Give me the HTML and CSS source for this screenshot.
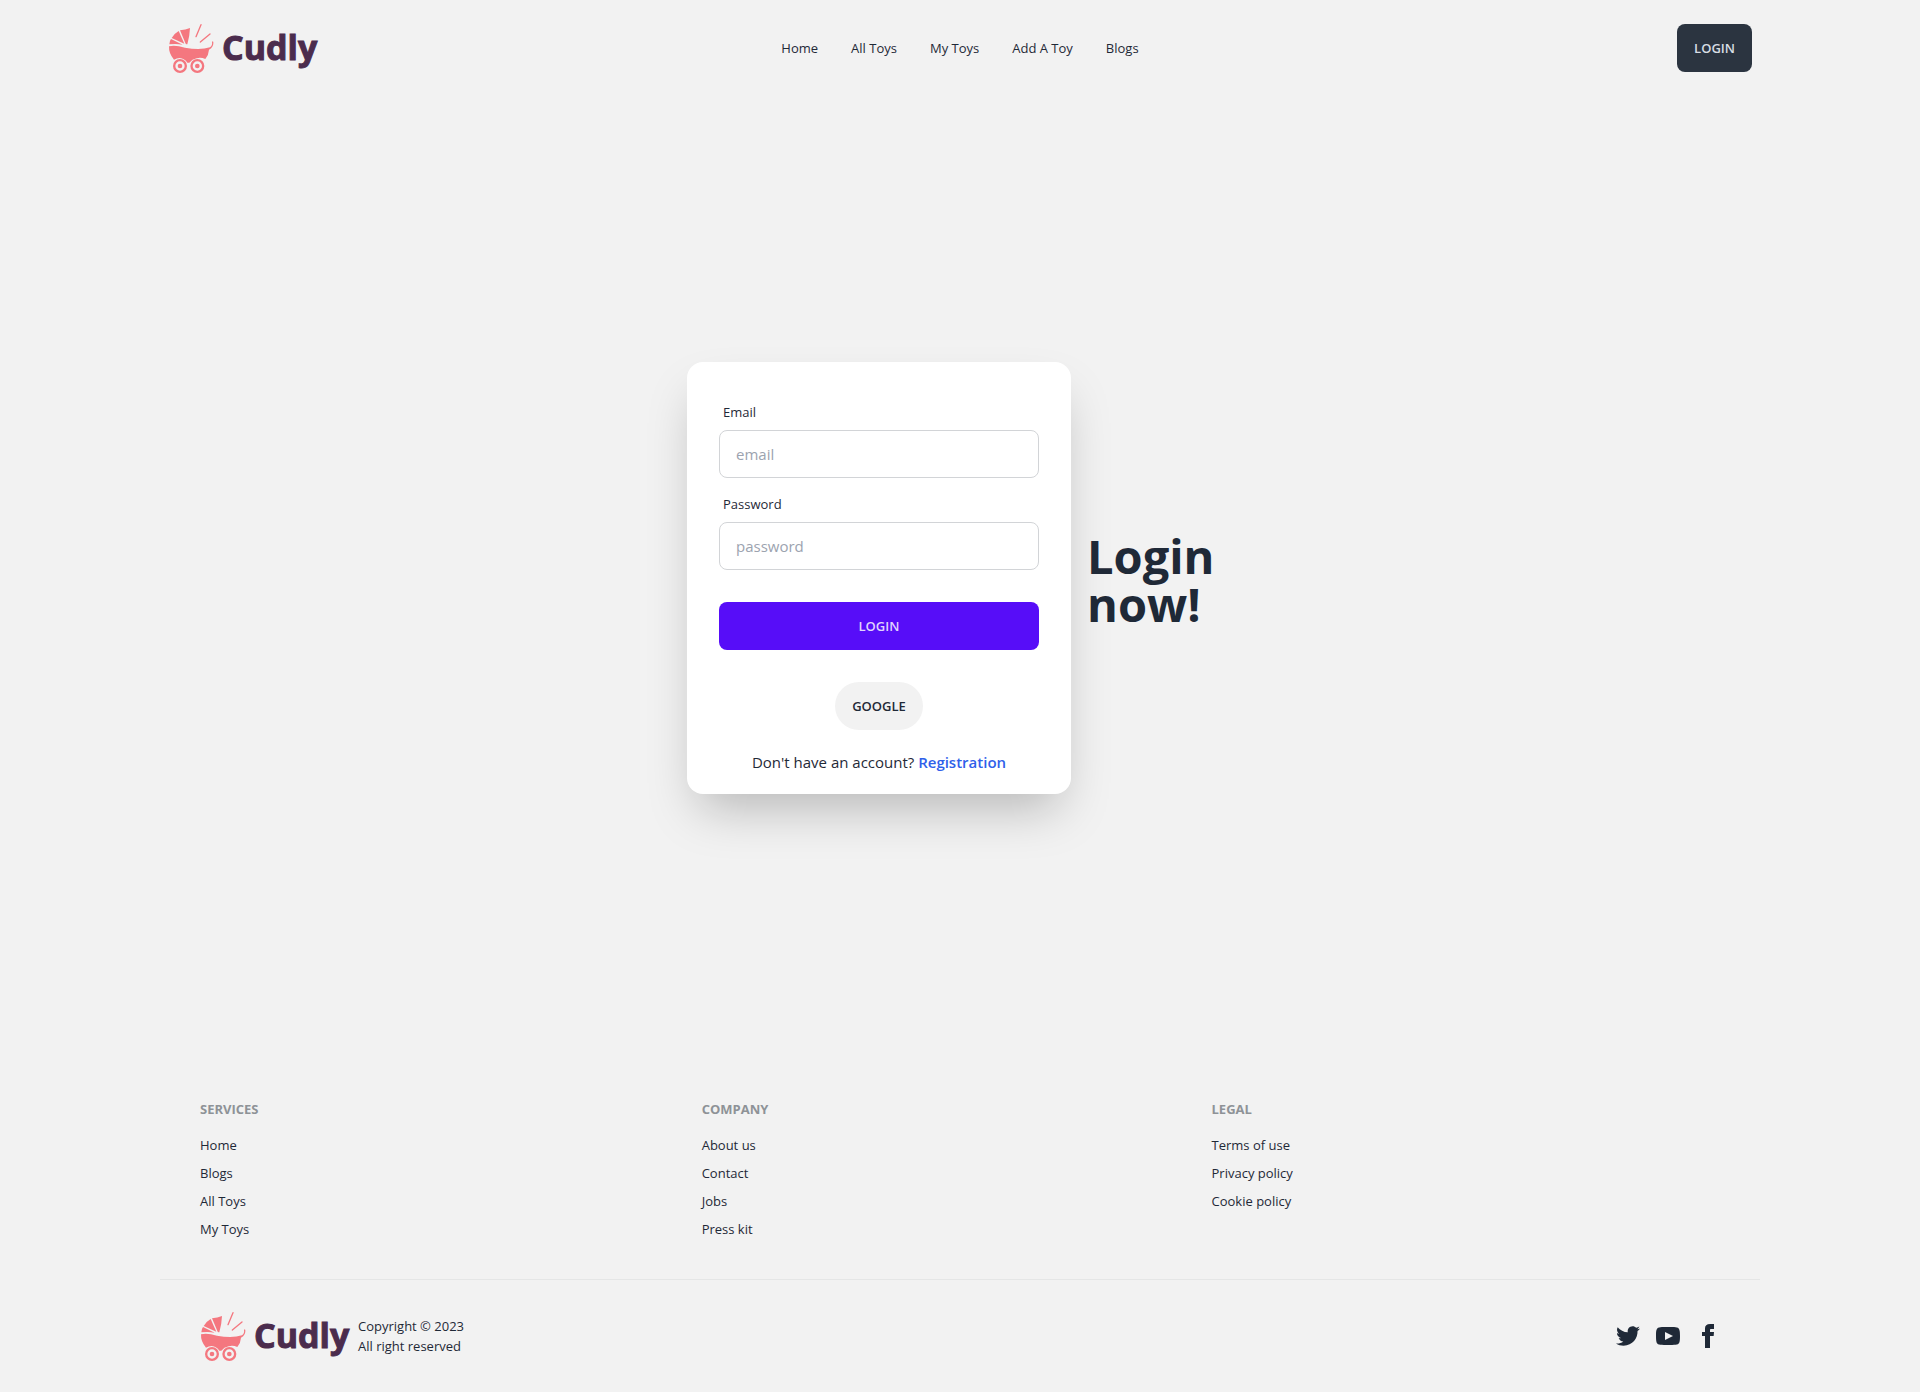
FILE: index.html
```html
<!DOCTYPE html>
<html lang="en">
<head>
<meta charset="utf-8">
<meta name="viewport" content="width=device-width, initial-scale=1">
<title>Cudly | Login</title>
<link rel="stylesheet" href="styles.css">
</head>
<body>
<svg width="0" height="0" class="sprite" aria-hidden="true">
  <symbol id="pram" viewBox="54 42 135 144">
    <g fill="#f4777f">
      <path d="M90 61Q107 60 120 54Q119 79 112 103Q109 103 107 101Z"/>
      <path d="M86 63L103 101L65 84Q72 71 86 63Z"/>
      <path d="M63 87L98 104Q78 100 58 103Q58 94 63 87Z"/>
      <path d="M57 109Q75 104 105 113Q150 122 180 112Q188 106 186 96Q188 92 190 96Q192 111 177 119Q176 135 166 147Q152 141 140 145Q126 148 118 158H112Q104 146 89 144Q80 144 72 149Q56 131 57 109Z"/>
    </g>
    <g fill="none" stroke="#f4777f">
      <circle cx="90" cy="168" r="17.500" stroke-width="7"/>
      <circle cx="142" cy="168" r="17.500" stroke-width="7"/>
      <path d="M153 44L138 80M180 72L151 96" stroke-width="4" stroke-linecap="round"/>
    </g>
    <g fill="#f4777f"><circle cx="90" cy="168" r="7"/><circle cx="142" cy="168" r="7"/></g>
  </symbol>
</svg>

<div class="page">
  <header class="navbar">
    <a href="#" class="logo"><svg aria-hidden="true"><use href="#pram"/></svg><span>Cudly</span></a>
    <nav class="menu">
      <a href="#">Home</a>
      <a href="#">All Toys</a>
      <a href="#">My Toys</a>
      <a href="#">Add A Toy</a>
      <a href="#">Blogs</a>
    </nav>
    <div class="navbar-end"><button type="button" class="btn btn-neutral">LOGIN</button></div>
  </header>

  <main class="hero">
    <div class="hero-content">
      <div class="card">
        <form class="form">
          <label for="email">Email</label>
          <input id="email" type="email" placeholder="email">
          <label for="password">Password</label>
          <input id="password" type="password" placeholder="password">
          <button type="submit" class="btn btn-primary">LOGIN</button>
        </form>
        <button type="button" class="btn btn-pill">GOOGLE</button>
        <p class="signup">Don't have an account? <a href="#">Registration</a></p>
      </div>
      <h1>Login now!</h1>
    </div>
  </main>

  <footer>
    <div class="footer-links">
      <nav>
        <h2>SERVICES</h2>
        <a href="#">Home</a>
        <a href="#">Blogs</a>
        <a href="#">All Toys</a>
        <a href="#">My Toys</a>
      </nav>
      <nav>
        <h2>COMPANY</h2>
        <a href="#">About us</a>
        <a href="#">Contact</a>
        <a href="#">Jobs</a>
        <a href="#">Press kit</a>
      </nav>
      <nav>
        <h2>LEGAL</h2>
        <a href="#">Terms of use</a>
        <a href="#">Privacy policy</a>
        <a href="#">Cookie policy</a>
      </nav>
    </div>
    <div class="footer-bottom">
      <div class="brand">
        <a href="#" class="logo"><svg aria-hidden="true"><use href="#pram"/></svg><span>Cudly</span></a>
        <p>Copyright © 2023<br>All right reserved</p>
      </div>
      <div class="social">
        <a href="#" aria-label="Twitter"><svg viewBox="0 0 24 24"><path d="M24 4.557c-.883.392-1.832.656-2.828.775 1.017-.609 1.798-1.574 2.165-2.724-.951.564-2.005.974-3.127 1.195-.897-.957-2.178-1.555-3.594-1.555-3.179 0-5.515 2.966-4.797 6.045-4.091-.205-7.719-2.165-10.148-5.144-1.29 2.213-.669 5.108 1.523 6.574-.806-.026-1.566-.247-2.229-.616-.054 2.281 1.581 4.415 3.949 4.89-.693.188-1.452.232-2.224.084.626 1.956 2.444 3.379 4.6 3.419-2.07 1.623-4.678 2.348-7.29 2.04 2.179 1.397 4.768 2.212 7.548 2.212 9.142 0 14.307-7.721 13.995-14.646.962-.695 1.797-1.562 2.457-2.549z"/></svg></a>
        <a href="#" aria-label="YouTube"><svg viewBox="0 0 24 24"><path d="M19.615 3.184c-3.604-.246-11.631-.245-15.230 0-3.897.266-4.356 2.620-4.385 8.816.029 6.185.484 8.549 4.385 8.816 3.600.245 11.626.246 15.230 0 3.897-.266 4.356-2.620 4.385-8.816-.029-6.185-.484-8.549-4.385-8.816zm-10.615 12.816v-8l8 3.993-8 4.007z"/></svg></a>
        <a href="#" aria-label="Facebook"><svg viewBox="0 0 24 24"><path d="M9 8h-3v4h3v12h5v-12h3.642l.358-4h-4v-1.667c0-.955.192-1.333 1.115-1.333h2.885v-5h-3.808c-3.596 0-5.192 1.583-5.192 4.615v3.385z"/></svg></a>
      </div>
    </div>
  </footer>
</div>
</body>
</html>
```
FILE: styles.css
```css
* { box-sizing: border-box; }

body {
  margin: 0;
  background: #f2f2f2;
  color: #1f2937;
  font: 13px/20px "Open Sans", "Noto Sans", sans-serif;
}

a { color: inherit; text-decoration: none; }
h1, h2, p { margin: 0; }
.sprite { position: absolute; }
symbol { overflow: visible; }

.page {
  display: flex;
  flex-direction: column;
  max-width: 1600px;
  min-height: 100vh;
  margin: 0 auto;
}

.logo {
  display: flex;
  align-items: flex-start;
  gap: 9px;
  width: 150px;
  height: 48px;
  color: #4b2c4d;
  font-size: 34px;
  font-weight: 700;
  line-height: 46px;
  -webkit-text-stroke: 1px #4b2c4d;
}

.logo svg {
  flex: none;
  width: 45px;
  height: 48px;
  overflow: visible;
}

.navbar {
  display: grid;
  grid-template-columns: 1fr auto 1fr;
  align-items: center;
  padding: 24px 8px;
}

.menu { display: flex; gap: 33px; }
.navbar-end { display: flex; justify-content: flex-end; }

.btn {
  height: 48px;
  padding: 0 17px;
  border: 0;
  border-radius: 8px;
  font: 600 13px/20px "Open Sans", "Noto Sans", sans-serif;
  cursor: pointer;
}

.btn-neutral { background: #2b3440; color: #d7dde4; }
.btn-primary { margin-top: 32px; background: #570df8; color: #e0d2fe; }
.btn-pill {
  align-self: center;
  margin-top: 32px;
  border-radius: 24px;
  background: #f2f2f2;
  color: #1f2937;
}

.hero {
  display: flex;
  flex: 1;
  align-items: center;
  justify-content: center;
}

.hero-content {
  display: flex;
  align-items: center;
  gap: 16px;
  padding: 16px;
}

.card {
  display: flex;
  flex-direction: column;
  width: 384px;
  padding: 32px 32px 20px;
  border-radius: 16px;
  background: #fff;
  box-shadow: 0 25px 50px -12px rgba(0, 0, 0, .25);
}

.form { display: flex; flex-direction: column; }
.form label { padding: 8px 4px; }
.form input + label { margin-top: 8px; }

.form input {
  width: 100%;
  height: 48px;
  padding: 0 16px;
  border: 1px solid #d2d4d7;
  border-radius: 8px;
  background: #fff;
  color: inherit;
  font: 15px/24px "Open Sans", "Noto Sans", sans-serif;
}

.form input::placeholder { color: #9ca3af; opacity: 1; }

.signup {
  margin-top: 20px;
  font-size: 15px;
  line-height: 24px;
  text-align: center;
}

.signup a { color: #2f5fea; font-weight: 600; }

h1 {
  width: 146px;
  padding-top: 4px;
  font-size: 47px;
  font-weight: 700;
  line-height: 48px;
}

.footer-links {
  display: grid;
  grid-template-columns: auto auto auto;
  gap: 16px;
  padding: 40px;
}

.footer-links nav {
  display: flex;
  flex-direction: column;
  align-items: flex-start;
  gap: 8px;
}

.footer-links h2 {
  margin-bottom: 8px;
  color: #8e9297;
  font-size: 13px;
  font-weight: 700;
  line-height: 20px;
}

.footer-bottom {
  display: flex;
  align-items: center;
  justify-content: space-between;
  padding: 32px 40px;
  border-top: 1px solid #e5e6e6;
}

.brand { display: flex; align-items: center; gap: 8px; }
.social { display: flex; gap: 16px; }
.social svg { display: block; width: 24px; height: 24px; fill: #1f2937; }
```
